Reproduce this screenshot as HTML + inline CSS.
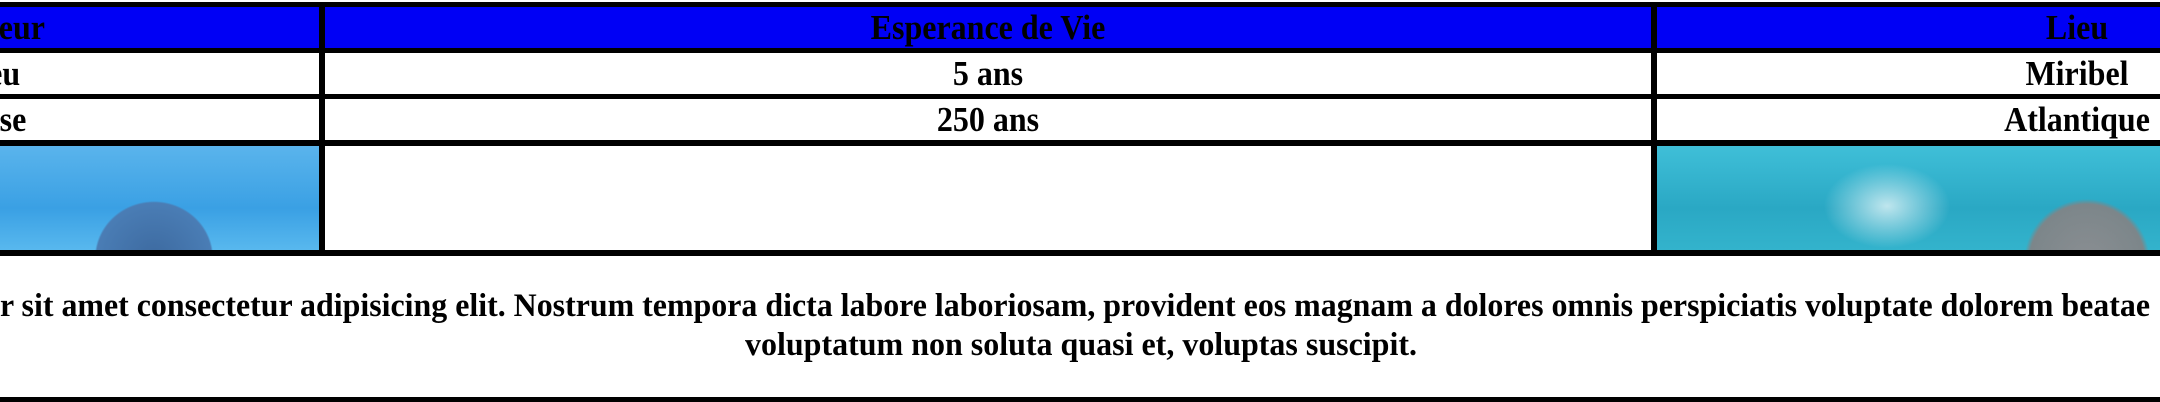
<!DOCTYPE html>
<html><head><style>
html,body{margin:0;padding:0;width:2160px;height:402px;overflow:hidden;background:#fff;font-family:"Liberation Serif",serif;font-weight:bold;position:relative}
.a{position:absolute}
.k{background:#000}
.c{position:absolute;text-align:center;font-size:32px;line-height:41px;white-space:nowrap;color:#000;transform:scaleY(1.08)}
svg{position:absolute;left:0;top:0}
</style></head><body>
<div class="a k" style="left:0;top:2px;width:2160px;height:5px"></div>
<div class="a" style="left:0;top:7px;width:2160px;height:41px;background:#0000f5"></div>
<div class="a k" style="left:0;top:48px;width:2160px;height:5px"></div>
<div class="a k" style="left:0;top:94px;width:2160px;height:5px"></div>
<div class="a k" style="left:0;top:140px;width:2160px;height:6px"></div>
<div class="a k" style="left:0;top:250px;width:2160px;height:6px"></div>
<div class="a k" style="left:319px;top:2px;width:6px;height:254px"></div>
<div class="a k" style="left:1651px;top:2px;width:6px;height:254px"></div>
<div class="a" style="left:0;top:146px;width:319px;height:104px;background:radial-gradient(ellipse 96px 92px at 154px 112px,#3d6aa0 0,#4a7db5 60%,transparent 62%),linear-gradient(180deg,#5ab4ec,#3aa0e4 60%,#58b8ee)"></div>
<div class="a" style="left:1657px;top:146px;width:503px;height:104px;background:radial-gradient(ellipse 105px 105px at 430px 116px,#8a8e92 0,#7c868a 55%,transparent 60%),radial-gradient(ellipse 90px 60px at 230px 60px,#bfe6ee 0,transparent 70%),linear-gradient(180deg,#3fbfd8,#2aa8c4 60%,#33b3cc)"></div>
<div class="c" style="left:-341px;width:660px;top:7px">Couleur</div>
<div class="c" style="left:-341px;width:660px;top:53px">Bleu</div>
<div class="c" style="left:-341px;width:660px;top:99px">Grise</div>
<div class="c" style="left:325px;width:1326px;top:7px">Esperance de Vie</div>
<div class="c" style="left:325px;width:1326px;top:53px">5 ans</div>
<div class="c" style="left:325px;width:1326px;top:99px">250 ans</div>
<div class="c" style="left:1657px;width:840px;top:7px">Lieu</div>
<div class="c" style="left:1657px;width:840px;top:53px">Miribel</div>
<div class="c" style="left:1657px;width:840px;top:99px">Atlantique</div>
<svg width="2160" height="402" xmlns="http://www.w3.org/2000/svg">
<text x="0" y="316" font-family="Liberation Serif, serif" font-weight="bold" font-size="33" textLength="2150" lengthAdjust="spacingAndGlyphs">r sit amet consectetur adipisicing elit. Nostrum tempora dicta labore laboriosam, provident eos magnam a dolores omnis perspiciatis voluptate dolorem beatae</text>
<text x="745" y="355" font-family="Liberation Serif, serif" font-weight="bold" font-size="33" textLength="672" lengthAdjust="spacingAndGlyphs">voluptatum non soluta quasi et, voluptas suscipit.</text>
</svg>
<div class="a k" style="left:0;top:397px;width:2160px;height:5px"></div>
</body></html>
